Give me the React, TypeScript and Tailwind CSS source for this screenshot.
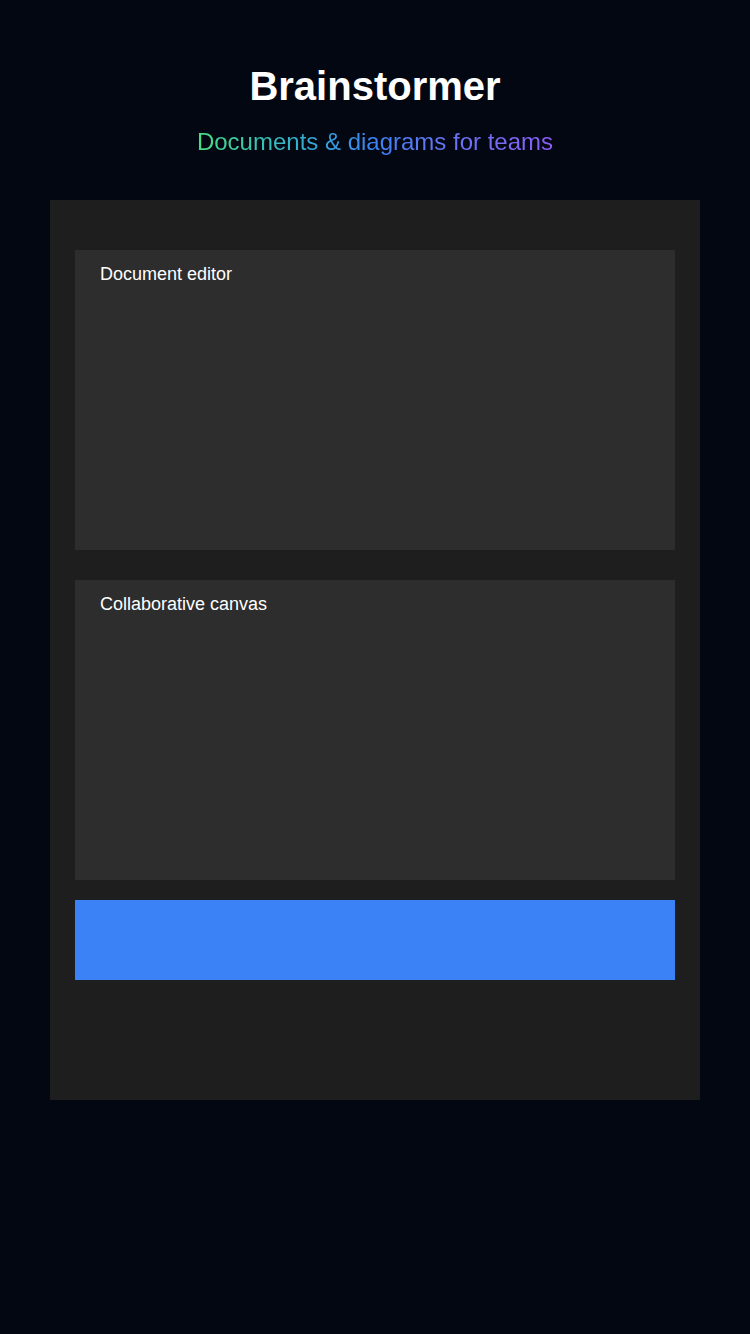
export default function App() {
  return (
    <div
      className="min-h-[1334px] w-full bg-[#030712] text-white"
      style={{ fontFamily: '"Liberation Sans", Arial, sans-serif' }}
    >
      <header className="flex flex-col items-center pt-[62px]">
        <h1 className="text-[40px] font-bold leading-[48px]">Brainstormer</h1>
        <p className="mt-[17px] bg-gradient-to-r from-[#4ade80] via-[#3b82f6] to-[#8b5cf6] bg-clip-text text-[24px] leading-[30px] text-transparent">
          Documents &amp; diagrams for teams
        </p>
      </header>

      <main className="mx-[50px] mt-[43px] flex h-[900px] flex-col bg-[#1e1e1e] px-[25px] pt-[50px]">
        <section className="h-[300px] bg-[#2d2d2d] px-[25px] pt-[13px]">
          <h2 className="text-[18px] leading-[22px]">Document editor</h2>
        </section>
        <section className="mt-[30px] h-[300px] bg-[#2d2d2d] px-[25px] pt-[13px]">
          <h2 className="text-[18px] leading-[22px]">Collaborative canvas</h2>
        </section>
        <div className="mt-[20px] h-[80px] bg-[#3b82f6]" />
      </main>
    </div>
  )
}
